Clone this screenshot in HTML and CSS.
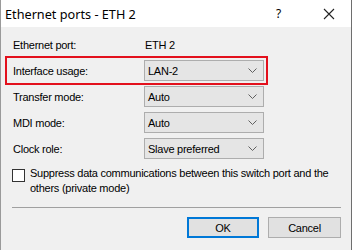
FILE: index.html
```html
<!DOCTYPE html>
<html>
<head>
<meta charset="utf-8">
<link rel="stylesheet" href="styles.css">
</head>
<body>
<div class="window">
  <div class="titlebar">
    <span class="title">Ethernet ports - ETH 2</span>
    <span class="tb-help">?</span>
    <span class="tb-close">
      <svg width="12" height="12" viewBox="0 0 12 12"><path d="M1 1 L11 11 M11 1 L1 11" stroke="#222" stroke-width="1.1" fill="none"/></svg>
    </span>
  </div>
  <div class="content">
    <div class="form">
      <div class="row">
        <span class="label">Ethernet port:</span>
        <span class="value">ETH 2</span>
      </div>
      <div class="row highlight">
        <span class="label">Interface usage:</span>
        <div class="combo"><span>LAN-2</span><svg class="chev" width="9" height="5" viewBox="0 0 9 5"><path d="M0.5 0.5 L4.5 4.5 L8.5 0.5" stroke="#606060" stroke-width="1" fill="none"/></svg></div>
      </div>
      <div class="row">
        <span class="label">Transfer mode:</span>
        <div class="combo"><span>Auto</span><svg class="chev" width="9" height="5" viewBox="0 0 9 5"><path d="M0.5 0.5 L4.5 4.5 L8.5 0.5" stroke="#606060" stroke-width="1" fill="none"/></svg></div>
      </div>
      <div class="row">
        <span class="label">MDI mode:</span>
        <div class="combo"><span>Auto</span><svg class="chev" width="9" height="5" viewBox="0 0 9 5"><path d="M0.5 0.5 L4.5 4.5 L8.5 0.5" stroke="#606060" stroke-width="1" fill="none"/></svg></div>
      </div>
      <div class="row">
        <span class="label">Clock role:</span>
        <div class="combo"><span>Slave preferred</span><svg class="chev" width="9" height="5" viewBox="0 0 9 5"><path d="M0.5 0.5 L4.5 4.5 L8.5 0.5" stroke="#606060" stroke-width="1" fill="none"/></svg></div>
      </div>
    </div>
    <div class="check">
      <span class="box"></span>
      <span class="check-text">Suppress data communications between this switch port and the others (private mode)</span>
    </div>
    <div class="sep"></div>
    <div class="buttons">
      <button class="btn default">OK</button>
      <button class="btn">Cancel</button>
    </div>
  </div>
</div>
</body>
</html>
```
FILE: styles.css
```css
html, body {
  margin: 0;
  padding: 0;
}
body {
  width: 352px;
  height: 250px;
  overflow: hidden;
  font-family: "Liberation Sans", Arial, sans-serif;
  font-size: 11px;
  letter-spacing: -0.25px;
  color: #000;
}
.window {
  width: 352px;
  height: 250px;
  display: flex;
  flex-direction: column;
  box-sizing: border-box;
  border-left: 1px solid #9a9a9a;
  border-right: 1px solid #6e6e6e;
}
.titlebar {
  height: 27px;
  background: #fff;
  display: flex;
  align-items: center;
  flex-shrink: 0;
}
.title {
  font-family: "Noto Sans", "Open Sans", sans-serif;
  font-size: 12.7px;
  letter-spacing: 0;
  padding-left: 4px;
  flex: 1;
}
.tb-help {
  font-family: "Noto Sans", sans-serif;
  font-size: 12px;
  letter-spacing: 0;
  width: 10px;
  margin-right: 37px;
}
.tb-close {
  display: flex;
  margin-right: 16px;
}
.content {
  flex: 1;
  background: #f0f0f0;
  padding: 7px 10px 0 11px;
}
.form {
  display: flex;
  flex-direction: column;
  gap: 5px;
  padding-left: 1px;
}
.row {
  display: grid;
  grid-template-columns: 131px 120px;
  height: 21px;
  align-items: center;
  position: relative;
}
.row.highlight::before {
  content: "";
  position: absolute;
  left: -8px;
  top: -4px;
  width: 263px;
  height: 29px;
  box-sizing: border-box;
  border: 2px solid #e3101c;
}
.value {
  padding-left: 1px;
}
.combo {
  height: 21px;
  box-sizing: border-box;
  border: 1px solid #adadad;
  background: #e5e5e5;
  display: flex;
  align-items: center;
  justify-content: space-between;
  padding: 0 6px 0 3px;
}
.check {
  display: flex;
  align-items: flex-start;
  margin-top: 10px;
  gap: 5px;
}
.box {
  width: 13px;
  height: 13px;
  box-sizing: border-box;
  border: 1px solid #333;
  background: #fff;
  flex-shrink: 0;
}
.check-text {
  line-height: 15px;
  margin-top: -3px;
  padding-right: 8px;
}
.sep {
  height: 1px;
  background: #a0a0a0;
  margin-top: 11px;
}
.buttons {
  display: flex;
  justify-content: flex-end;
  gap: 9px;
  margin-top: 9px;
}
.btn {
  font-family: "Liberation Sans", Arial, sans-serif;
  font-size: 11px;
  letter-spacing: -0.25px;
  width: 73px;
  height: 21px;
  box-sizing: border-box;
  background: #e1e1e1;
  border: 1px solid #adadad;
  padding: 0;
  color: #000;
}
.btn.default {
  border: 2px solid #0078d7;
  width: 72px;
}
```
